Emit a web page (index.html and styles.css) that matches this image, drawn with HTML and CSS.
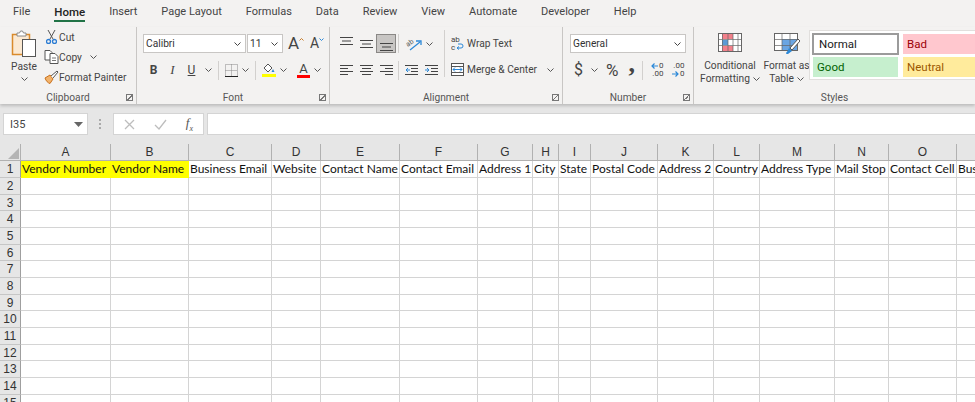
FILE: index.html
```html
<!DOCTYPE html>
<html lang="en">
<head>
    <meta charset="UTF-8">
    <title>Vendors - Excel</title>
    <link rel="stylesheet" href="styles.css">
</head>
<body>

<!-- Tabs -->
<nav class="tabs">
    <span class="tab">File</span>
    <span class="tab active">Home</span>
    <span class="tab">Insert</span>
    <span class="tab">Page Layout</span>
    <span class="tab">Formulas</span>
    <span class="tab">Data</span>
    <span class="tab">Review</span>
    <span class="tab">View</span>
    <span class="tab">Automate</span>
    <span class="tab">Developer</span>
    <span class="tab">Help</span>
</nav>

<!-- Ribbon -->
<div class="ribbon">

    <section class="group clipboard">
        <div class="group-body clip-body">
            <div class="paste">
                <svg width="26" height="28" viewBox="0 0 26 28"><rect x="1.5" y="4.5" width="17" height="20" fill="#fbe9d2" stroke="#d98a2b" stroke-width="1.5"/><path d="M6 5V3h2.500l1-2h2l1 2H15v3H6z" fill="#fff" stroke="#8a8a8a"/><rect x="11.500" y="9.500" width="13" height="17" fill="#fff" stroke="#555"/></svg>
                <span class="paste-label">Paste</span>
                <svg class="chev" width="7" height="4" viewBox="0 0 7 4"><path d="M.5.500l3 3 3-3" fill="none" stroke="#555"/></svg>
            </div>
            <div class="clip-list">
                <div class="clip-item">
                    <span class="clip-icon"><svg width="11" height="14" viewBox="0 0 11 14"><path d="M2 0l5 9M9 0L4 9" stroke="#555" fill="none"/><circle cx="2.500" cy="11.500" r="2" fill="none" stroke="#2b7cd3" stroke-width="1.300"/><circle cx="8.500" cy="11.500" r="2" fill="none" stroke="#2b7cd3" stroke-width="1.300"/></svg></span>
                    <span>Cut</span>
                </div>
                <div class="clip-item">
                    <span class="clip-icon"><svg width="15" height="14" viewBox="0 0 15 14"><path d="M1 .500h5l2 2V10H1z" fill="#fff" stroke="#555"/><path d="M6 3.500h5l3 3v7H6z" fill="#fff" stroke="#555"/><path d="M8 8h4M8 10.500h4" stroke="#777"/></svg></span>
                    <span>Copy</span>
                    <svg class="chev copy-chev" width="7" height="4" viewBox="0 0 7 4"><path d="M.5.500l3 3 3-3" fill="none" stroke="#555"/></svg>
                </div>
                <div class="clip-item">
                    <span class="clip-icon"><svg width="15" height="14" viewBox="0 0 15 14"><path d="M1 8l5-3 3 4-3 4.500C4 13 2 11 1 8z" fill="#f2b36b" stroke="#c8701c"/><path d="M7 6l6-5 1 1-5 6" fill="#fff" stroke="#555"/></svg></span>
                    <span>Format Painter</span>
                </div>
            </div>
        </div>
        <div class="group-label">Clipboard<i class="launcher"></i></div>
    </section>

    <section class="group font">
        <div class="group-body">
            <div class="tool-row font-top">
                <div class="combo font-name">Calibri<svg class="chev" width="7" height="4" viewBox="0 0 7 4"><path d="M.5.500l3 3 3-3" fill="none" stroke="#444"/></svg></div>
                <div class="combo font-size">11<svg class="chev" width="7" height="4" viewBox="0 0 7 4"><path d="M.5.500l3 3 3-3" fill="none" stroke="#444"/></svg></div>
                <span class="grow-a">A<svg width="5" height="3" viewBox="0 0 5 3"><path d="M.5 2.500l2-2 2 2" fill="none" stroke="#c77c2a"/></svg></span>
                <span class="shrink-a">A<svg width="5" height="3" viewBox="0 0 5 3"><path d="M.5.500l2 2 2-2" fill="none" stroke="#2b88d8"/></svg></span>
            </div>
            <div class="tool-row font-bottom">
                <span class="fmt bold">B</span>
                <span class="fmt italic">I</span>
                <span class="fmt underline">U</span>
                <svg class="chev" width="7" height="4" viewBox="0 0 7 4"><path d="M.5.500l3 3 3-3" fill="none" stroke="#555"/></svg>
                <i class="vsep"></i>
                <svg width="13" height="13" viewBox="0 0 13 13"><path d="M.5.500h12v12H.5zM6.500.500v12M.5 6.500h12" fill="none" stroke="#888" stroke-dasharray="1 1"/><path d="M0 12.500h13" stroke="#222"/></svg>
                <svg class="chev" width="7" height="4" viewBox="0 0 7 4"><path d="M.5.500l3 3 3-3" fill="none" stroke="#555"/></svg>
                <i class="vsep"></i>
                <svg width="14" height="14" viewBox="0 0 14 14"><path d="M6 1l4 4-4 4-4-4z" fill="#fff" stroke="#555"/><path d="M11 6l1.500 3h-3z" fill="#2b88d8"/><rect y="11" width="14" height="3" fill="#ffff00"/></svg>
                <svg class="chev" width="7" height="4" viewBox="0 0 7 4"><path d="M.5.500l3 3 3-3" fill="none" stroke="#555"/></svg>
                <span class="color-a">A</span>
                <svg class="chev" width="7" height="4" viewBox="0 0 7 4"><path d="M.5.500l3 3 3-3" fill="none" stroke="#555"/></svg>
            </div>
        </div>
        <div class="group-label">Font<i class="launcher"></i></div>
    </section>

    <section class="group alignment">
        <div class="group-body align-body">
            <div class="align-grid">
                <span class="al"><svg width="13" height="14" viewBox="0 0 13 14"><path d="M0 .500h13M2 4h9M0 7.500h13" stroke="#444"/></svg></span>
                <span class="al"><svg width="13" height="14" viewBox="0 0 13 14"><path d="M0 3.500h13M2 7h9M0 10.500h13" stroke="#444"/></svg></span>
                <span class="al selected"><svg width="13" height="14" viewBox="0 0 13 14"><path d="M0 6.500h13M2 10h9M0 13.500h13" stroke="#444"/></svg></span>
                <i class="vsep tall"></i>
                <span class="al orient"><svg width="18" height="14" viewBox="0 0 18 14"><text x="1" y="8" font-size="7" font-family="Roboto" fill="#555" transform="rotate(-35 5 6)">ab</text><path d="M5 13L15 5" stroke="#2b88d8" stroke-width="1.300"/><path d="M11 4h5v4" fill="none" stroke="#2b88d8" stroke-width="1.300"/></svg><svg class="chev" width="7" height="4" viewBox="0 0 7 4"><path d="M.5.500l3 3 3-3" fill="none" stroke="#555"/></svg></span>
                <span class="al"><svg width="13" height="11" viewBox="0 0 13 11"><path d="M0 .500h13M0 3.500h8M0 6.500h13M0 9.500h8" stroke="#444"/></svg></span>
                <span class="al"><svg width="13" height="11" viewBox="0 0 13 11"><path d="M0 .500h13M2 3.500h9M0 6.500h13M2 9.500h9" stroke="#444"/></svg></span>
                <span class="al"><svg width="13" height="11" viewBox="0 0 13 11"><path d="M0 .500h13M5 3.500h8M0 6.500h13M5 9.500h8" stroke="#444"/></svg></span>
                <i class="vsep tall"></i>
                <span class="al orient indents">
                    <svg width="13" height="11" viewBox="0 0 13 11"><path d="M0 .500h13M6 3.500h7M6 6.500h7M0 9.500h13" stroke="#444"/><path d="M5 5H1M3 3L1 5l2 2" stroke="#2b88d8" fill="none"/></svg>
                    <svg width="13" height="11" viewBox="0 0 13 11"><path d="M0 .500h13M6 3.500h7M6 6.500h7M0 9.500h13" stroke="#444"/><path d="M0 5h4M2 3l2 2-2 2" stroke="#2b88d8" fill="none"/></svg>
                </span>
            </div>
            <i class="vsep full"></i>
            <div class="wrap-col">
                <div class="wrap-item">
                    <svg width="13" height="15" viewBox="0 0 13 15"><text x="0" y="6" font-size="8" font-family="Roboto" fill="#444">ab</text><text x="0" y="14" font-size="8" font-family="Roboto" fill="#444">c</text><path d="M7 8h3a2 2 0 010 4H6M8 10.500L6 12l2 1.500" fill="none" stroke="#2b88d8"/></svg>
                    <span>Wrap Text</span>
                </div>
                <div class="wrap-item">
                    <svg width="13" height="13" viewBox="0 0 13 13"><rect x=".5" y=".5" width="12" height="12" fill="#fff" stroke="#555"/><path d="M.5 3.500h12M.5 9.500h12" stroke="#555"/><path d="M2 6.500h9M4 4.500l-2 2 2 2M9 4.500l2 2-2 2" fill="none" stroke="#2b88d8"/></svg>
                    <span>Merge &amp; Center</span>
                    <svg class="chev merge-chev" width="7" height="4" viewBox="0 0 7 4"><path d="M.5.500l3 3 3-3" fill="none" stroke="#555"/></svg>
                </div>
            </div>
        </div>
        <div class="group-label">Alignment<i class="launcher"></i></div>
    </section>

    <section class="group number">
        <div class="group-body">
            <div class="tool-row number-top">
                <div class="combo number-format">General<svg class="chev" width="7" height="4" viewBox="0 0 7 4"><path d="M.5.500l3 3 3-3" fill="none" stroke="#444"/></svg></div>
            </div>
            <div class="tool-row number-bottom">
                <span class="num-sym dollar">$</span>
                <svg class="chev" width="7" height="4" viewBox="0 0 7 4"><path d="M.5.500l3 3 3-3" fill="none" stroke="#555"/></svg>
                <span class="num-sym percent">%</span>
                <span class="num-sym comma">,</span>
                <i class="vsep"></i>
                <span class="dec">
                    <span class="dec-line"><svg width="8" height="6" viewBox="0 0 8 6"><path d="M7 3H1M3.500.500L1 3l2.500 2.500" fill="none" stroke="#2b88d8" stroke-width="1.200"/></svg>0</span>
                    <span class="dec-line">.00</span>
                </span>
                <span class="dec">
                    <span class="dec-line">.00</span>
                    <span class="dec-line"><svg width="8" height="6" viewBox="0 0 8 6"><path d="M0 3h6M3.500.500L6 3 3.500 5.500" fill="none" stroke="#2b88d8" stroke-width="1.200"/></svg>0</span>
                </span>
            </div>
        </div>
        <div class="group-label">Number<i class="launcher"></i></div>
    </section>

    <section class="group styles">
        <div class="group-body styles-body">
            <div class="big-btn cond">
                <svg width="24" height="19" viewBox="0 0 24 19"><rect x=".5" y=".5" width="23" height="18" fill="#fff" stroke="#666"/><rect x="4" y="1" width="11" height="5" fill="#f2808a"/><rect x="4" y="13" width="11" height="5" fill="#f2808a"/><rect x="4" y="7" width="6" height="5" fill="#5b9bd5"/><path d="M4.500 0v19M10 0v19M15 0v19M20 0v19M0 6.500h24M0 12.500h24" stroke="#666" stroke-width=".7"/></svg>
                <span class="big-label">Conditional<br>Formatting<svg class="chev" width="7" height="4" viewBox="0 0 7 4"><path d="M.5.500l3 3 3-3" fill="none" stroke="#555"/></svg></span>
            </div>
            <div class="big-btn table-btn">
                <svg width="26" height="22" viewBox="0 0 26 22"><rect x=".5" y=".5" width="23" height="17" fill="#fff" stroke="#666"/><rect x="8" y="6" width="15" height="11" fill="#6aa5e3"/><path d="M8 0v18M16 0v18M0 6.500h24M0 12.500h24" stroke="#666" stroke-width=".7"/><path d="M24 6l-8 9 2 2 8-9z" fill="#fff" stroke="#555"/><path d="M15 15l3 3-4 3c-1 0-2 0-2-1 1-1 2-3 3-5z" fill="#2b88d8"/></svg>
                <span class="big-label">Format as<br>Table<svg class="chev" width="7" height="4" viewBox="0 0 7 4"><path d="M.5.500l3 3 3-3" fill="none" stroke="#555"/></svg></span>
            </div>
            <div class="gallery">
                <div class="style-cell normal">Normal</div>
                <div class="style-cell bad">Bad</div>
                <div class="style-cell good">Good</div>
                <div class="style-cell neutral">Neutral</div>
            </div>
        </div>
        <div class="group-label">Styles</div>
    </section>
</div>

<!-- Formula bar -->
<div class="formula-bar">
    <div class="name-box">I35<svg width="9" height="5" viewBox="0 0 9 5"><path d="M0 0h9L4.500 5z" fill="#666"/></svg></div>
    <div class="grip"></div>
    <div class="fx-box">
        <svg width="11" height="11" viewBox="0 0 11 11"><path d="M1 1l9 9M10 1l-9 9" stroke="#bdbdbd" stroke-width="1.300"/></svg>
        <svg width="13" height="11" viewBox="0 0 13 11"><path d="M1 6l4 4 7-9" fill="none" stroke="#bdbdbd" stroke-width="1.300"/></svg>
        <span class="fx">f<sub>x</sub></span>
    </div>
    <div class="formula-input"></div>
</div>

<!-- Sheet -->
<table class="sheet">
    <colgroup>
        <col class="c-rh"><col class="c-a"><col class="c-b"><col class="c-c"><col class="c-d"><col class="c-e"><col class="c-f"><col class="c-g"><col class="c-h"><col class="c-i"><col class="c-j"><col class="c-k"><col class="c-l"><col class="c-m"><col class="c-n"><col class="c-o"><col class="c-p">
    </colgroup>
    <thead>
        <tr>
            <th class="corner"><i></i></th>
            <th>A</th><th>B</th><th>C</th><th>D</th><th>E</th><th>F</th><th>G</th><th>H</th><th>I</th><th>J</th><th>K</th><th>L</th><th>M</th><th>N</th><th>O</th><th></th>
        </tr>
    </thead>
    <tbody>
        <tr>
            <th>1</th>
            <td class="hl">Vendor Number</td><td class="hl">Vendor Name</td><td>Business Email</td><td>Website</td><td>Contact Name</td><td>Contact Email</td><td>Address 1</td><td>City</td><td>State</td><td>Postal Code</td><td>Address 2</td><td>Country</td><td>Address Type</td><td>Mail Stop</td><td>Contact Cell</td><td>Bus</td>
        </tr>
        <tr><th>2</th><td></td><td></td><td></td><td></td><td></td><td></td><td></td><td></td><td></td><td></td><td></td><td></td><td></td><td></td><td></td><td></td></tr>
        <tr><th>3</th><td></td><td></td><td></td><td></td><td></td><td></td><td></td><td></td><td></td><td></td><td></td><td></td><td></td><td></td><td></td><td></td></tr>
        <tr><th>4</th><td></td><td></td><td></td><td></td><td></td><td></td><td></td><td></td><td></td><td></td><td></td><td></td><td></td><td></td><td></td><td></td></tr>
        <tr><th>5</th><td></td><td></td><td></td><td></td><td></td><td></td><td></td><td></td><td></td><td></td><td></td><td></td><td></td><td></td><td></td><td></td></tr>
        <tr><th>6</th><td></td><td></td><td></td><td></td><td></td><td></td><td></td><td></td><td></td><td></td><td></td><td></td><td></td><td></td><td></td><td></td></tr>
        <tr><th>7</th><td></td><td></td><td></td><td></td><td></td><td></td><td></td><td></td><td></td><td></td><td></td><td></td><td></td><td></td><td></td><td></td></tr>
        <tr><th>8</th><td></td><td></td><td></td><td></td><td></td><td></td><td></td><td></td><td></td><td></td><td></td><td></td><td></td><td></td><td></td><td></td></tr>
        <tr><th>9</th><td></td><td></td><td></td><td></td><td></td><td></td><td></td><td></td><td></td><td></td><td></td><td></td><td></td><td></td><td></td><td></td></tr>
        <tr><th>10</th><td></td><td></td><td></td><td></td><td></td><td></td><td></td><td></td><td></td><td></td><td></td><td></td><td></td><td></td><td></td><td></td></tr>
        <tr><th>11</th><td></td><td></td><td></td><td></td><td></td><td></td><td></td><td></td><td></td><td></td><td></td><td></td><td></td><td></td><td></td><td></td></tr>
        <tr><th>12</th><td></td><td></td><td></td><td></td><td></td><td></td><td></td><td></td><td></td><td></td><td></td><td></td><td></td><td></td><td></td><td></td></tr>
        <tr><th>13</th><td></td><td></td><td></td><td></td><td></td><td></td><td></td><td></td><td></td><td></td><td></td><td></td><td></td><td></td><td></td><td></td></tr>
        <tr><th>14</th><td></td><td></td><td></td><td></td><td></td><td></td><td></td><td></td><td></td><td></td><td></td><td></td><td></td><td></td><td></td><td></td></tr>
        <tr><th>15</th><td></td><td></td><td></td><td></td><td></td><td></td><td></td><td></td><td></td><td></td><td></td><td></td><td></td><td></td><td></td><td></td></tr>
    </tbody>
</table>

</body>
</html>
```

FILE: styles.css
```css
html, body {
    margin: 0;
    padding: 0;
    height: 402px;
    overflow: hidden;
}

body {
    width: 975px;
    background-color: #e6e6e6;
    font-family: Roboto, "Noto Sans", sans-serif;
    font-size: 10.2px;
    color: #444;
}

svg {
    flex: none;
    display: block;
}

/* Tabs */
.tabs {
    display: flex;
    height: 27px;
    padding-left: 1px;
    background-color: #f3f2f1;
}

.tab {
    padding: 4px 12px 0;
    font-size: 11px;
    line-height: 16px;
    color: #444;
}

.tab.active {
    color: #222;
    font-size: 11.5px;
    font-weight: 500;
}

.tab.active::after {
    content: "";
    display: block;
    height: 2px;
    background-color: #217346;
}

/* Ribbon */
.ribbon {
    display: flex;
    height: 77px;
    background-color: #f3f2f1;
    box-shadow: 0 2px 3px rgba(0, 0, 0, 0.18);
    overflow: hidden;
}

.group {
    display: flex;
    flex-direction: column;
    flex: none;
    border-right: 1px solid #c8c6c4;
    box-sizing: border-box;
    height: 77px;
}

.group-body {
    height: 64px;
    flex: none;
}

.group-label {
    position: relative;
    text-align: center;
    line-height: 13px;
    color: #555;
}

.launcher {
    position: absolute;
    right: 3px;
    top: 3px;
    width: 5px;
    height: 5px;
    border: 1px solid #777;
    background: linear-gradient(135deg, transparent 45%, #777 45%, #777 60%, transparent 60%);
}

.vsep {
    display: block;
    flex: none;
    width: 1px;
    height: 19px;
    background-color: #d2d0ce;
}

.chev {
    flex: none;
}

.tool-row {
    display: flex;
    align-items: center;
}

.combo {
    display: flex;
    align-items: center;
    justify-content: space-between;
    box-sizing: border-box;
    height: 19px;
    padding: 0 4px 0 2px;
    background-color: #fff;
    border: 1px solid #c8c6c4;
    color: #333;
}

/* Clipboard */
.clipboard {
    width: 137px;
}

.clip-body {
    display: flex;
}

.paste {
    display: flex;
    flex-direction: column;
    align-items: center;
    width: 34px;
    margin-left: 7px;
    padding-top: 3px;
}

.paste-label {
    margin-top: 1px;
    line-height: 15px;
}

.paste .chev {
    margin-top: 3px;
}

.clip-list {
    display: flex;
    flex-direction: column;
    margin-left: 2px;
}

.clip-item {
    display: flex;
    align-items: center;
    height: 20px;
    white-space: nowrap;
}

.clip-icon {
    display: flex;
    justify-content: center;
    width: 16px;
}

.copy-chev {
    margin-left: 8px;
}

/* Font */
.font {
    width: 193px;
}

.font-top {
    padding: 7px 0 0 6px;
    gap: 1px;
}

.font-name {
    width: 103px;
}

.font-size {
    width: 36px;
}

.grow-a,
.shrink-a {
    display: flex;
    align-items: flex-start;
    color: #444;
}

.grow-a {
    margin-left: 4px;
    font-size: 17px;
    line-height: 19px;
}

.shrink-a {
    margin-left: 5px;
    font-size: 14px;
    line-height: 19px;
}

.grow-a svg,
.shrink-a svg {
    margin-top: 4px;
}

.font-bottom {
    height: 22px;
    margin-top: 6px;
    padding-left: 7px;
}

.fmt {
    width: 19px;
    font-size: 12px;
    color: #444;
    text-align: center;
}

.bold {
    font-weight: 700;
}

.italic {
    font-family: "Liberation Serif", serif;
    font-style: italic;
    font-size: 13px;
}

.underline {
    text-decoration: underline;
}

.font-bottom .chev {
    margin: 0 6px 0 4px;
}

.font-bottom .vsep {
    margin-right: 6px;
}

.color-a {
    box-sizing: border-box;
    margin-left: 4px;
    width: 13px;
    height: 16px;
    font-size: 13px;
    line-height: 13px;
    text-align: center;
    border-bottom: 3px solid #ff0000;
}

/* Alignment */
.alignment {
    width: 233px;
}

.align-body {
    display: flex;
    padding-top: 3px;
    box-sizing: border-box;
}

.align-grid {
    display: grid;
    grid-template-columns: 20px 20px 20px 6px 46px;
    grid-auto-rows: 27px;
    width: 112px;
    margin-left: 6px;
    align-items: center;
}

.al {
    display: flex;
    align-items: center;
    justify-content: center;
    height: 19px;
}

.al.selected {
    background-color: #c8c6c4;
    border: 1px solid #8a8886;
    box-sizing: border-box;
}

.orient {
    gap: 3px;
    margin-left: 3px;
    justify-content: flex-start;
}

.indents {
    gap: 7px;
}

.vsep.tall {
    margin-left: 2px;
}

.vsep.full {
    height: 47px;
    margin: 0 6px 0 -4px;
}

.wrap-col {
    display: flex;
    flex-direction: column;
    padding-top: 4px;
}

.wrap-item {
    display: flex;
    align-items: center;
    gap: 3px;
    height: 19px;
    margin-bottom: 7px;
    white-space: nowrap;
}

.merge-chev {
    margin-left: 7px;
}

/* Number */
.number {
    width: 131px;
}

.number-top {
    padding: 7px 0 0 7px;
}

.number-format {
    width: 116px;
}

.number-bottom {
    height: 22px;
    margin-top: 6px;
    padding-left: 11px;
}

.num-sym {
    font-size: 16px;
    line-height: 22px;
    color: #444;
}

.dollar {
    margin-right: 8px;
}

.percent {
    margin-left: 8px;
    font-size: 17px;
}

.comma {
    width: 8px;
    margin-left: 10px;
    margin-right: 6px;
    font-family: "Liberation Serif", serif;
    font-weight: 700;
    font-size: 26px;
    line-height: 10px;
    height: 22px;
}

.number-bottom .vsep {
    margin-right: 6px;
}

.dec {
    display: flex;
    flex-direction: column;
    width: 14px;
    margin-right: 7px;
    font-size: 8px;
    line-height: 8px;
}

.dec-line {
    display: flex;
    align-items: center;
    justify-content: flex-end;
}

/* Styles */
.styles {
    flex: 1;
    border-right: 0;
    min-width: 0;
}

.styles-body {
    display: flex;
}

.big-btn {
    display: flex;
    flex-direction: column;
    align-items: center;
    flex: none;
    padding-top: 6px;
    text-align: center;
}

.cond {
    width: 72px;
}

.table-btn {
    width: 45px;
    margin-left: -2px;
}

.big-label {
    margin-top: 4px;
    line-height: 13px;
    white-space: nowrap;
}

.cond .big-label {
    margin-top: 7px;
}

.big-label .chev {
    display: inline-block;
    margin-left: 3px;
    vertical-align: middle;
}

.gallery {
    display: grid;
    grid-template-columns: 87px 87px;
    grid-template-rows: 22px 22px;
    gap: 1px 3px;
    align-content: center;
    width: 170px;
    height: 50px;
    margin: 3px 0 0;
    padding: 2px;
    box-sizing: border-box;
    background-color: #fff;
    border: 1px solid #e1dfdd;
    border-right: 0;
    font-size: 11.5px;
    flex: none;
}

.style-cell {
    display: flex;
    align-items: center;
    padding-left: 4px;
    margin: 1px;
}

.normal {
    margin: 0;
    padding-left: 5px;
    border: 2px solid #9b9b9b;
    box-sizing: border-box;
    color: #1a1a1a;
}

.bad {
    background-color: #ffc7ce;
    color: #9c0006;
}

.good {
    background-color: #c6efce;
    color: #006100;
}

.neutral {
    background-color: #ffeb9c;
    color: #9c5700;
}

/* Formula bar */
.formula-bar {
    display: flex;
    align-items: stretch;
    height: 22px;
    margin-top: 9px;
    padding-left: 3px;
}

.name-box {
    display: flex;
    align-items: center;
    justify-content: space-between;
    box-sizing: border-box;
    width: 85px;
    padding: 0 4px 0 6px;
    background-color: #fff;
    border: 1px solid #d4d4d4;
    font-size: 11px;
}

.grip {
    width: 2px;
    margin: 6px 12px 6px 11px;
    background: repeating-linear-gradient(#aaa 0 2px, transparent 2px 4px);
}

.fx-box {
    display: flex;
    align-items: center;
    justify-content: space-between;
    box-sizing: border-box;
    width: 91px;
    margin-right: 3px;
    padding: 0 10px;
    background-color: #fff;
    border: 1px solid #d4d4d4;
}

.fx {
    font-family: "Liberation Serif", serif;
    font-style: italic;
    font-size: 13px;
    color: #555;
}

.fx sub {
    font-size: 8px;
}

.formula-input {
    flex: 1;
    background-color: #fff;
    border: 1px solid #d4d4d4;
    border-right: 0;
}

/* Sheet */
.sheet {
    table-layout: fixed;
    width: 975px;
    margin-top: 9px;
    border-collapse: separate;
    border-spacing: 0;
    background-color: #fff;
    font-family: Lato, sans-serif;
    font-size: 12px;
    color: #111;
}

.c-rh { width: 21px; }
.c-a { width: 90px; }
.c-b { width: 78px; }
.c-c { width: 83px; }
.c-d { width: 49px; }
.c-e { width: 79px; }
.c-f { width: 78px; }
.c-g { width: 55px; }
.c-h { width: 26px; }
.c-i { width: 32px; }
.c-j { width: 67px; }
.c-k { width: 56px; }
.c-l { width: 46px; }
.c-m { width: 75px; }
.c-n { width: 54px; }
.c-o { width: 68px; }
.c-p { width: 18px; }

.sheet th {
    padding: 0;
    box-sizing: border-box;
    background-color: #e6e6e6;
    border-right: 1px solid #b1b1b1;
    border-bottom: 1px solid #b1b1b1;
    font-family: "Liberation Sans", sans-serif;
    font-size: 12px;
    font-weight: 400;
    color: #333;
    text-align: center;
}

.sheet thead th:last-child {
    border-right: 0;
}

.sheet tbody th {
    border-right-color: #9f9f9f;
    border-bottom-color: #c6c6c6;
}

.sheet thead tr,
.sheet tbody tr {
    height: 17px;
}

.sheet tbody tr:nth-child(3n) {
    height: 16px;
}

.sheet td {
    padding: 0 0 0 1px;
    box-sizing: border-box;
    overflow: hidden;
    white-space: nowrap;
    line-height: 14px;
    border-right: 1px solid #d4d4d4;
    border-bottom: 1px solid #d4d4d4;
}

.sheet td:last-child {
    border-right: 0;
}

.sheet td.hl {
    background-color: #ffff00;
    border-color: #ffff00;
}

.corner i {
    display: block;
    width: 0;
    height: 0;
    margin: 3px 1px 0 auto;
    border-style: solid;
    border-width: 0 0 11px 11px;
    border-color: transparent transparent #b4b4b4 transparent;
}
```
